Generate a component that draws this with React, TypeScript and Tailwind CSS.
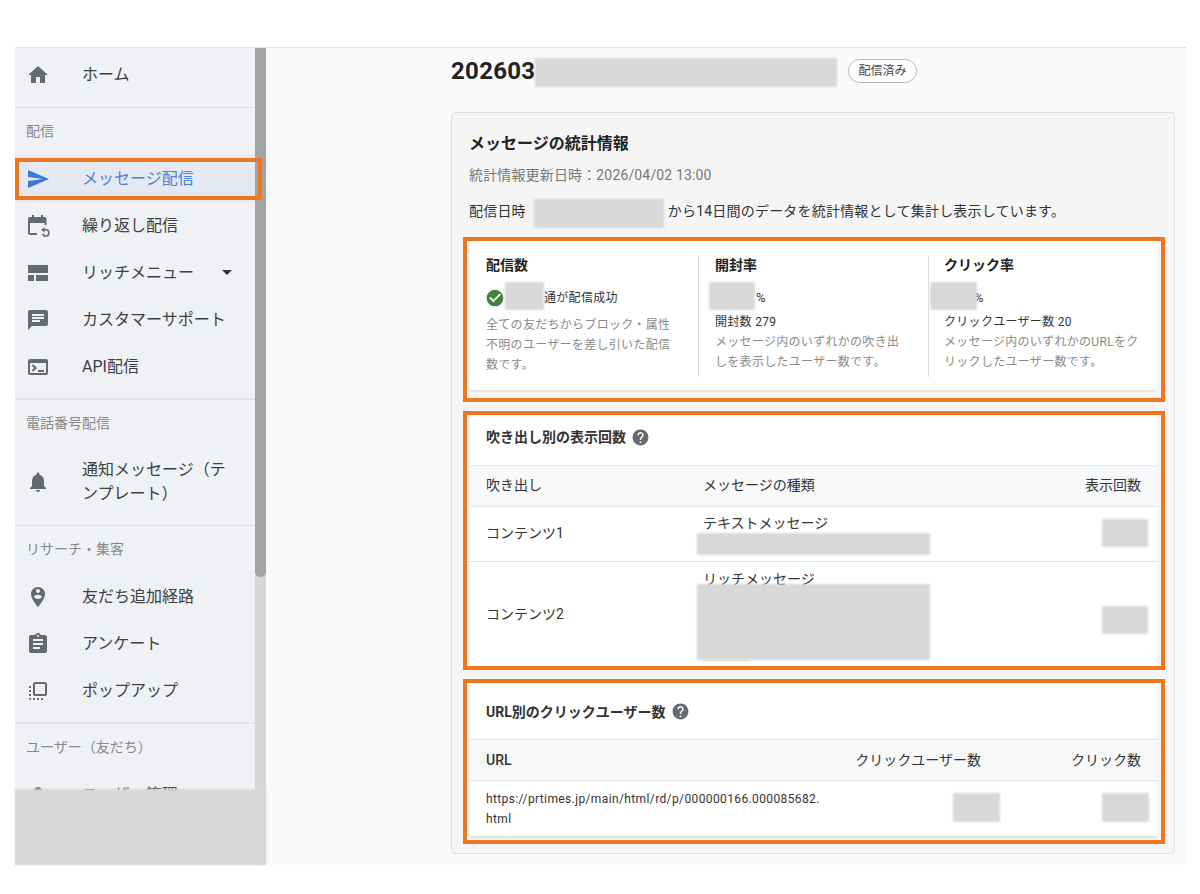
import type { ReactNode } from "react";

const FONT = "font-['Roboto','Noto_Sans_CJK_JP',sans-serif]";

function Icon({ d, className = "size-6 text-[#666a70]" }: { d: string; className?: string }) {
  return (
    <svg viewBox="0 0 24 24" fill="currentColor" className={className} aria-hidden>
      <path d={d} />
    </svg>
  );
}

const ICONS = {
  home: "M10 20v-6h4v6h5v-8h3L12 3 2 12h3v8z",
  send: "M2.01 21L23 12 2.01 3 2 10l15 2-15 2z",
  chat: "M20 2H4c-1.1 0-1.99.9-1.99 2L2 22l4-4h14c1.1 0 2-.9 2-2V4c0-1.1-.9-2-2-2zM6 9h12v2H6V9zm8 5H6v-2h8v2zm4-6H6V6h12v2z",
  bell: "M12 22c1.1 0 2-.9 2-2h-4c0 1.1.89 2 2 2zm6-6v-5c0-3.07-1.64-5.64-4.5-6.32V4c0-.83-.67-1.5-1.5-1.5s-1.5.67-1.5 1.5v.68C7.63 5.36 6 7.92 6 11v5l-2 2v1h16v-1l-2-2z",
  pin: "M12 2C8.14 2 5 5.14 5 9c0 5.25 7 13 7 13s7-7.75 7-13c0-3.86-3.14-7-7-7zm0 2c1.1 0 2 .9 2 2 0 1.11-.9 2-2 2s-2-.89-2-2c0-1.1.9-2 2-2zm0 10c-1.67 0-3.14-.85-4-2.15.02-1.32 2.67-2.05 4-2.05s3.98.73 4 2.05c-.86 1.3-2.33 2.15-4 2.15z",
  survey: "M19 3h-4.18C14.4 1.84 13.3 1 12 1c-1.3 0-2.4.84-2.82 2H5c-1.1 0-2 .9-2 2v14c0 1.1.9 2 2 2h14c1.1 0 2-.9 2-2V5c0-1.1-.9-2-2-2zm-7 0c.55 0 1 .45 1 1s-.45 1-1 1-1-.45-1-1 .45-1 1-1zm2 14H7v-2h7v2zm3-4H7v-2h10v2zm0-4H7V7h10v2z",
  popup: "M3 13h2v-2H3v2zm0 4h2v-2H3v2zm2 4v-2H3c0 1.1.89 2 2 2zM3 9h2V7H3v2zm12 12h2v-2h-2v2zm4-18H9c-1.11 0-2 .9-2 2v10c0 1.1.89 2 2 2h10c1.1 0 2-.9 2-2V5c0-1.1-.9-2-2-2zm0 12H9V5h10v10zm-8 6h2v-2h-2v2zm-4 0h2v-2H7v2z",
  person: "M12 12c2.21 0 4-1.79 4-4s-1.79-4-4-4-4 1.79-4 4 1.79 4 4 4zm0 2c-2.67 0-8 1.34-8 4v2h16v-2c0-2.66-5.33-4-8-4z",
  help: "M12 2C6.48 2 2 6.48 2 12s4.48 10 10 10 10-4.48 10-10S17.52 2 12 2zm1 17h-2v-2h2v2zm2.07-7.75l-.9.92C13.45 12.9 13 13.5 13 15h-2v-.5c0-1.1.45-2.1 1.17-2.83l1.24-1.26c.37-.36.59-.86.59-1.41 0-1.1-.9-2-2-2s-2 .9-2 2H8c0-2.21 1.79-4 4-4s4 1.79 4 4c0 .88-.36 1.68-.93 2.25z",
  check: "M12 2C6.48 2 2 6.48 2 12s4.48 10 10 10 10-4.48 10-10S17.52 2 12 2zm-2 15l-5-5 1.41-1.41L10 14.17l7.59-7.59L19 8l-9 9z",
};

function CalendarRepeatIcon() {
  return (
    <svg viewBox="0 0 24 24" className="size-6 text-[#666a70]" aria-hidden>
      <path
        fill="currentColor"
        d="M6 1h2v2h7V1h2v2h1.5a2 2 0 0 1 2 2v6h-2V9H4v10h7v2H4a2 2 0 0 1-2-2V5a2 2 0 0 1 2-2h2z"
      />
      <path
        fill="none"
        stroke="currentColor"
        strokeWidth="1.6"
        d="M16.5 15.8h3.4a3.1 3.1 0 1 1-3.1 3.9"
      />
      <path fill="currentColor" d="M18.6 13v5.4l-3.4-2.7z" />
    </svg>
  );
}

function QuiltIcon() {
  return (
    <svg viewBox="0 0 24 24" className="size-6 text-[#666a70]" aria-hidden>
      <path fill="currentColor" d="M2 4h20v8H2zM2 14h6v6H2zM10 14h12v6H10z" />
    </svg>
  );
}

function TerminalIcon() {
  return (
    <svg viewBox="0 0 24 24" className="size-6 text-[#666a70]" aria-hidden>
      <path
        fill="currentColor"
        fillRule="evenodd"
        d="M4 4h16a2 2 0 0 1 2 2v12a2 2 0 0 1-2 2H4a2 2 0 0 1-2-2V6a2 2 0 0 1 2-2zm0 4v10h16V8z"
      />
      <path fill="none" stroke="currentColor" strokeWidth="2" d="M6.5 10l3 3-3 3" />
      <path fill="currentColor" d="M12 15h6v2h-6z" />
    </svg>
  );
}

function NavItem({ icon, children, trailing }: { icon: ReactNode; children: ReactNode; trailing?: boolean }) {
  return (
    <div className="flex h-[47px] items-center">
      <span className="flex w-[67px] shrink-0 pl-[11px]">{icon}</span>
      <span className="text-base leading-8 text-[#3c3f44]">{children}</span>
      {trailing && <span className="ml-auto mr-[23px] h-0 w-0 border-x-[5px] border-t-[5px] border-x-transparent border-t-[#333]" />}
    </div>
  );
}

function NavLabel({ children }: { children: ReactNode }) {
  return <div className="flex h-[47px] items-center pb-0.5 pl-[11px] text-sm text-[#85888d]">{children}</div>;
}

function Sidebar() {
  return (
    <aside className="h-full w-60 shrink-0 overflow-hidden bg-[#eff1f5]">
      <div className="border-b border-[#d9dbe0] pb-[9px] pt-[3px]">
        <NavItem icon={<Icon d={ICONS.home} />}>ホーム</NavItem>
      </div>
      <div className="border-b-2 border-[#e3e5e9] pb-2">
        <NavLabel>配信</NavLabel>
        <div className="flex h-[47px] items-center bg-[#e3e8f3]">
          <span className="flex w-[67px] shrink-0 pl-[11px]">
            <Icon d={ICONS.send} className="size-6 text-[#3b78d8]" />
          </span>
          <span className="text-base text-[#4a82dc]">メッセージ配信</span>
        </div>
        <NavItem icon={<CalendarRepeatIcon />}>繰り返し配信</NavItem>
        <NavItem icon={<QuiltIcon />} trailing>
          リッチメニュー
        </NavItem>
        <NavItem icon={<Icon d={ICONS.chat} />}>カスタマーサポート</NavItem>
        <NavItem icon={<TerminalIcon />}>API配信</NavItem>
      </div>
      <div className="border-b border-[#d9dbe0] pb-[11px]">
        <NavLabel>電話番号配信</NavLabel>
        <div className="mt-[3px] flex h-16 items-center">
          <span className="flex w-[67px] shrink-0 pl-[11px]">
            <Icon d={ICONS.bell} />
          </span>
          <span className="w-[150px] text-base leading-6 text-[#3c3f44]">通知メッセージ（テンプレート）</span>
        </div>
      </div>
      <div className="border-b-2 border-[#e3e5e9] pb-2">
        <NavLabel>リサーチ・集客</NavLabel>
        <NavItem icon={<Icon d={ICONS.pin} />}>友だち追加経路</NavItem>
        <NavItem icon={<Icon d={ICONS.survey} />}>アンケート</NavItem>
        <NavItem icon={<Icon d={ICONS.popup} />}>ポップアップ</NavItem>
      </div>
      <NavLabel>ユーザー（友だち）</NavLabel>
      <NavItem icon={<Icon d={ICONS.person} />}>ユーザー管理</NavItem>
    </aside>
  );
}

function Scrollbar() {
  return (
    <div className="h-full w-[11px] shrink-0 bg-[#d6d6d6]">
      <div className="h-[529px] rounded-b-md bg-[#a3a3a3]" />
    </div>
  );
}

function Help() {
  return <Icon d={ICONS.help} className="size-[19px] text-[#666a70]" />;
}

function Highlight({ className }: { className: string }) {
  return <div className={`pointer-events-none absolute z-10 border-4 border-[#f0751f] ${className}`} />;
}

function StatColumn({ title, children, className }: { title: string; children: ReactNode; className: string }) {
  return (
    <div className={`h-[122px] ${className}`}>
      <div className="text-sm font-bold leading-5 text-[#222]">{title}</div>
      {children}
    </div>
  );
}

function Description({ children }: { children: ReactNode }) {
  return <p className="text-xs leading-5 tracking-[0.3px] text-[#8a8a8a]">{children}</p>;
}

function SectionTitle({ children, className }: { children: ReactNode; className: string }) {
  return (
    <div className={`flex items-center gap-[5px] pl-[17px] text-sm font-bold leading-5 text-[#333] ${className}`}>
      <span>{children}</span>
      <Help />
    </div>
  );
}

function App() {
  return (
    <div className={`relative h-[894px] w-[1200px] overflow-hidden bg-white pl-[15px] pt-[47px] ${FONT}`}>
      <div className="flex h-[818px] w-[1171px] border-t border-[#e2e2e2]">
        <Sidebar />
        <Scrollbar />

        <main className="min-w-0 flex-1 bg-[#f9fafc] pl-[185px] pr-[11px] pt-[11px]">
          <div className="flex h-6 items-center">
            <h1 className="w-[397px] text-2xl font-bold tracking-[0.3px] text-[#222]">202603</h1>
            <span className="flex h-6 w-[69px] items-center justify-center rounded-full border border-[#b8b8b8] bg-white text-xs text-[#444]">
              配信済み
            </span>
          </div>

          <section className="mt-[29px] rounded border border-[#e0e0e0] bg-[#f5f5f5] px-[17px] pb-[15px] pt-[21px]">
            <h2 className="text-base font-bold leading-5 text-[#222]">メッセージの統計情報</h2>
            <p className="mt-[11px] text-sm leading-5 tracking-[0.15px] text-[#777]">統計情報更新日時：2026/04/02 13:00</p>
            <p className="mt-4 text-sm leading-5 tracking-[0.2px] text-[#333]">
              配信日時<span className="ml-[142px]">から14日間のデータを統計情報として集計し表示しています。</span>
            </p>

            <div className="relative mt-5">
              <Highlight className="-bottom-[10px] -left-[6px] -right-[8px] -top-1" />
              <div className="grid h-[151px] w-[688px] grid-cols-[230px_230px_228px] rounded border-b-2 border-[#e6e6e6] bg-white pt-[14px]">
                <StatColumn title="配信数" className="border-r border-[#dcdcdc] pl-[17px]">
                  <div className="mt-[13px] flex h-5 items-center text-xs tracking-[0.3px] text-[#333]">
                    <Icon d={ICONS.check} className="ml-[-1px] size-5 text-[#41843f]" />
                    <span className="ml-[39px]">通が配信成功</span>
                  </div>
                  <div className="mt-[7px]">
                    <Description>
                      全ての友だちからブロック・属性
                      <br />
                      不明のユーザーを差し引いた配信
                      <br />
                      数です。
                    </Description>
                  </div>
                </StatColumn>
                <StatColumn title="開封率" className="border-r border-[#dcdcdc] pl-4">
                  <div className="mt-[13px] pl-[41px] text-[13px] leading-5 text-[#333]">%</div>
                  <div className="mt-1 text-xs leading-5 tracking-[0.3px] text-[#333]">開封数 279</div>
                  <Description>
                    メッセージ内のいずれかの吹き出
                    <br />
                    しを表示したユーザー数です。
                  </Description>
                </StatColumn>
                <StatColumn title="クリック率" className="pl-[15px]">
                  <div className="mt-[13px] pl-[30px] text-[13px] leading-5 text-[#333]">%</div>
                  <div className="mt-1 text-xs leading-5 tracking-[0.3px] text-[#333]">クリックユーザー数 20</div>
                  <Description>
                    メッセージ内のいずれかのURLをク
                    <br />
                    リックしたユーザー数です。
                  </Description>
                </StatColumn>
              </div>
            </div>

            <div className="relative mt-[23px]">
              <Highlight className="-bottom-1 -left-[6px] -right-[8px] -top-1" />
              <div className="h-[251px] w-[688px] bg-white text-sm text-[#333]">
                <SectionTitle className="h-[50px] pb-[6px]">吹き出し別の表示回数</SectionTitle>
                <div className="flex h-[42px] items-center border-y-2 border-[#eceef0] bg-[#f8f9fb] pb-0.5 pl-[17px] pr-4">
                  <span className="w-[217px]">吹き出し</span>
                  <span>メッセージの種類</span>
                  <span className="ml-auto">表示回数</span>
                </div>
                <div className="flex h-[55px] border-b border-[#e0e0e0] pl-[17px]">
                  <span className="mt-4 w-[217px] leading-5">コンテンツ1</span>
                  <span className="mt-[6px] leading-5">テキストメッセージ</span>
                </div>
                <div className="flex pl-[17px]">
                  <span className="mt-[42px] w-[217px] leading-5">コンテンツ2</span>
                  <span className="mt-[7px] leading-5">リッチメッセージ</span>
                </div>
              </div>
            </div>

            <div className="relative mt-[18px]">
              <Highlight className="-bottom-[6px] -left-[6px] -right-[8px] -top-[5px]" />
              <div className="h-[154px] w-[688px] rounded bg-white text-sm text-[#333]">
                <SectionTitle className="h-[55px]">URL別のクリックユーザー数</SectionTitle>
                <div className="flex h-[42px] items-center border-y border-[#e0e2e5] bg-[#f8f9fb] pb-px pl-[17px] pr-4">
                  <span className="font-medium">URL</span>
                  <span className="ml-auto">クリックユーザー数</span>
                  <span className="ml-[90px]">クリック数</span>
                </div>
                <div className="h-[57px] rounded-b border-b-2 border-[#e0e2e5] pl-[17px] pt-2 text-xs leading-5 tracking-[0.38px] text-[#333]">
                  https://prtimes.jp/main/html/rd/p/000000166.000085682.
                  <br />
                  html
                </div>
              </div>
            </div>
          </section>
        </main>
      </div>

      {/* orange box over the active nav row */}
      <div className="pointer-events-none absolute left-[15px] top-[158px] z-10 h-[42px] w-[247px] border-4 border-[#f0751f]" />

      {/* blurred-out areas of the source picture */}
      <div className="absolute left-[703px] top-[660px] h-px w-[46px] bg-[#f3c9ae]" />
      <div className="absolute left-[535px] top-[58px] h-[29px] w-[302px] bg-[#d8d8d8] blur-[1px]" />
      <div className="absolute left-[534px] top-[199px] h-[29px] w-[130px] bg-[#d8d8d8] blur-[1px]" />
      <div className="absolute left-[505px] top-[282px] h-[28px] w-[39px] bg-[#d8d8d8] blur-[1px]" />
      <div className="absolute left-[709px] top-[282px] h-[28px] w-[46px] bg-[#d8d8d8] blur-[1px]" />
      <div className="absolute left-[930px] top-[282px] h-[28px] w-[47px] bg-[#d8d8d8] blur-[1px]" />
      <div className="absolute left-[697px] top-[533px] h-[22px] w-[233px] bg-[#d8d8d8] blur-[1px]" />
      <div className="absolute left-[1102px] top-[519px] h-[28px] w-[46px] bg-[#d8d8d8] blur-[1px]" />
      <div className="absolute left-[697px] top-[584px] h-[76px] w-[233px] bg-[#d8d8d8] blur-[1px]" />
      <div className="absolute left-[1102px] top-[606px] h-[28px] w-[46px] bg-[#d8d8d8] blur-[1px]" />
      <div className="absolute left-[953px] top-[793px] h-[29px] w-[47px] bg-[#d8d8d8] blur-[1px]" />
      <div className="absolute left-[1102px] top-[793px] h-[29px] w-[47px] bg-[#d8d8d8] blur-[1px]" />
      <div className="absolute left-[15px] top-[789px] h-[76px] w-[251px] bg-[#d8d8d8] blur-[1px]" />
    </div>
  );
}

export default App;
